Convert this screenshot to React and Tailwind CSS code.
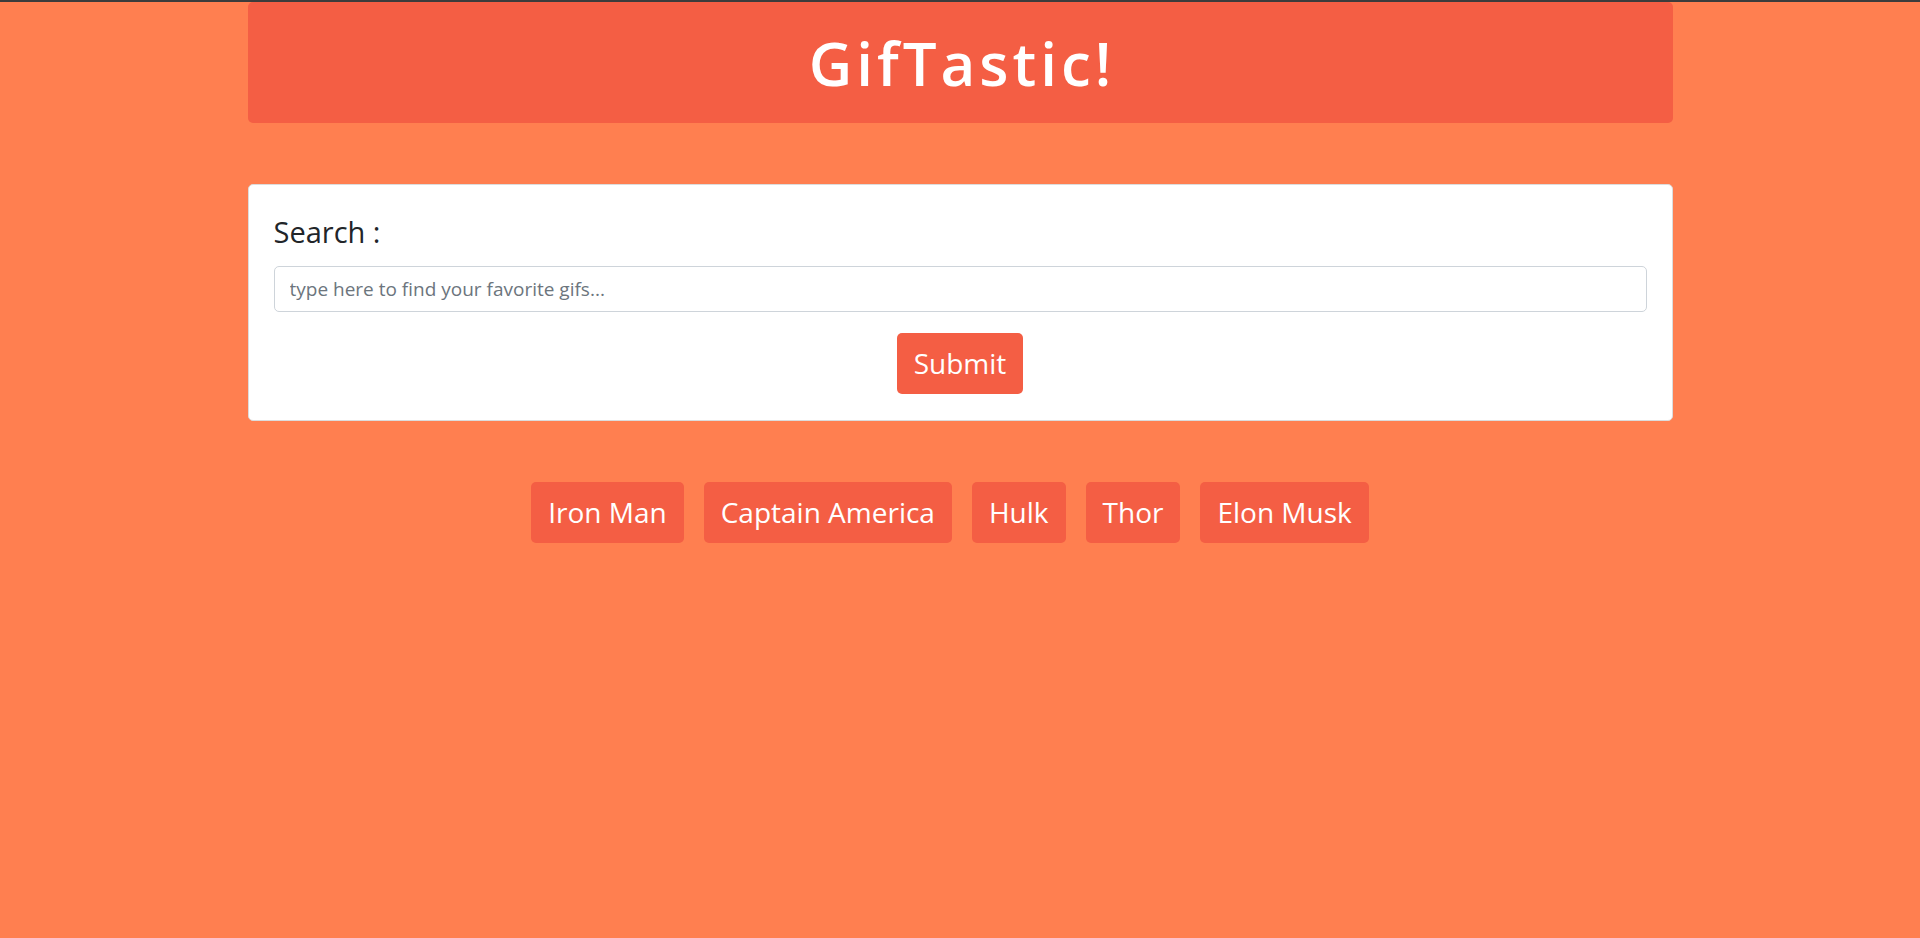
import React, { useState } from "react";

const heroes = ["Iron Man", "Captain America", "Hulk", "Thor", "Elon Musk"];

const font = { fontFamily: '"Open Sans", "Noto Sans", sans-serif' };

export default function App() {
  const [query, setQuery] = useState("");

  return (
    <div
      className="min-h-[938px] bg-[#ff7f50] border-t-2 border-[#3c3c3c]"
      style={font}
    >
      {/* ===== Header ===== */}
      <header className="w-[1425px] mx-auto h-[121px] bg-[#f45e44] rounded-[5px] flex items-center justify-center">
        <h1 className="text-white text-[60px] font-semibold tracking-[4px] leading-none pl-[4px]">
          GifTastic!
        </h1>
      </header>

      {/* ===== Search card ===== */}
      <div className="w-[1425px] mx-auto mt-[61px] bg-white border border-[#dcdcdc] rounded-[5px] px-[25px] pt-[24px] pb-[26px]">
        <label className="block text-[29px] leading-[45px] text-[#212529] mb-[12px]">
          Search :
        </label>
        <input
          type="text"
          value={query}
          onChange={(e) => setQuery(e.target.value)}
          placeholder="type here to find your favorite gifs..."
          className="block w-full h-[46px] px-[15px] text-[19px] text-[#495057] placeholder:text-[#6c757d] border border-[#ced4da] rounded-[5px] outline-none"
        />
        <div className="flex justify-center mt-[21px]">
          <button
            type="button"
            className="h-[61px] px-[17px] bg-[#f45e44] text-white text-[28px] leading-[45px] rounded-[5px]"
          >
            Submit
          </button>
        </div>
      </div>

      {/* ===== Buttons ===== */}
      <div className="flex justify-center gap-[20px] mt-[61px] pr-[20px]">
        {heroes.map((name) => (
          <button
            key={name}
            type="button"
            className="h-[61px] px-[17px] bg-[#f45e44] text-white text-[28px] leading-[45px] rounded-[5px]"
          >
            {name}
          </button>
        ))}
      </div>
    </div>
  );
}
